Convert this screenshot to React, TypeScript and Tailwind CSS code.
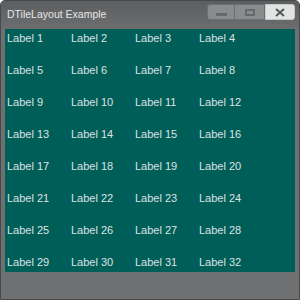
import React from "react";

const labels = Array.from({ length: 32 }, (_, i) => `Label ${i + 1}`);

export default function App() {
  return (
    <div className="w-[300px] h-[300px] bg-[#6e7072] border border-[#46484a] rounded-t-[5px] flex flex-col font-['Liberation_Sans',Arial,sans-serif]">
      {/* title bar */}
      <div className="h-[28px] flex items-start bg-gradient-to-b from-[#5c5e60] to-[#6b6d6f] rounded-t-[4px]">
        <span className="mt-[6px] ml-[6px] text-[10.5px] leading-[14px] text-[#e6e6e6]">
          DTileLayout Example
        </span>
        <div className="ml-auto mt-[3px] mr-[4px] flex h-[16px]">
          <button className="w-[28px] h-full bg-[#898b8d] border border-[#6c6e70] rounded-l-[3px] flex items-center justify-center">
            <span className="block w-[11px] h-[3px] bg-[#66686a] mt-[5px]" />
          </button>
          <button className="w-[30px] h-full bg-[#898b8d] border-y border-r border-[#6c6e70] flex items-center justify-center">
            <span className="block w-[10px] h-[7px] border-2 border-[#66686a]" />
          </button>
          <button className="w-[30px] h-full bg-[#e2e3e3] border border-[#c8c9ca] rounded-r-[3px] flex items-center justify-center">
            <svg width="10" height="9" viewBox="0 0 10 9">
              <path d="M1 1 L9 8 M9 1 L1 8" stroke="#55575a" strokeWidth="2" />
            </svg>
          </button>
        </div>
      </div>
      {/* tile area */}
      <div className="mx-[4px] h-[243px] bg-[#005e59] overflow-hidden pt-[2px] pl-[2px]">
        <div className="grid grid-cols-[64px_64px_64px_64px] gap-y-[18px]">
          {labels.map((l) => (
            <span key={l} className="text-[11px] leading-[14px] text-[#dfe3e2]">
              {l}
            </span>
          ))}
        </div>
      </div>
    </div>
  );
}
